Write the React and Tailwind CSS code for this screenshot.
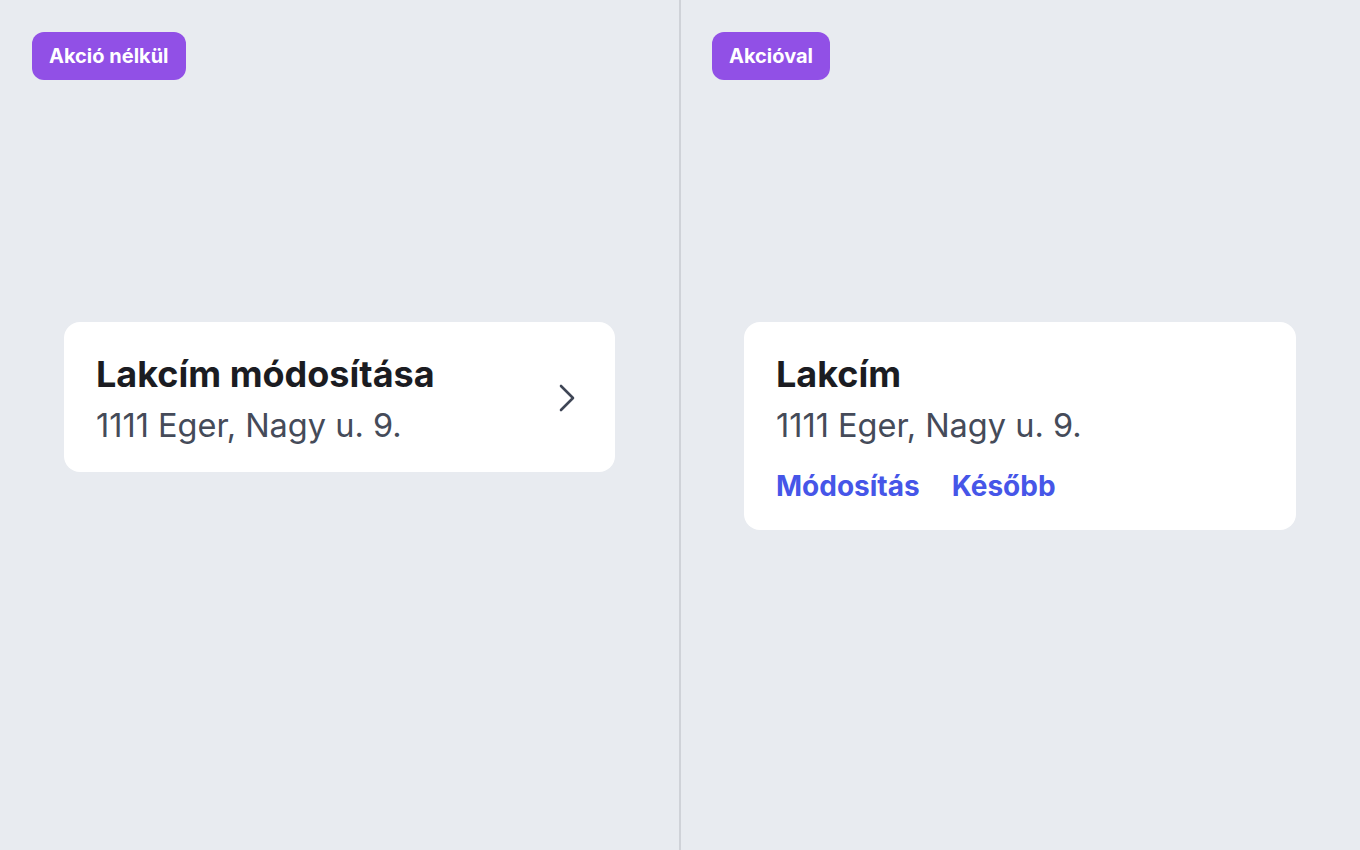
import { ChevronRight } from "lucide-react";

function Badge({ children }) {
  return (
    <span className="inline-flex h-12 items-center rounded-xl bg-[#9150e6] px-[17px] text-[20px] font-bold text-white">
      {children}
    </span>
  );
}

export default function App() {
  return (
    <main className="flex h-[850px] w-[1360px] bg-[#e8ebf0] font-['Inter',sans-serif]">
      {/* bez akcio */}
      <section className="flex w-[679px] flex-col pt-8">
        <div className="px-8">
          <Badge>Akció nélkül</Badge>
        </div>
        <div className="mx-16 mt-[242px] flex items-center justify-between rounded-2xl bg-white px-8 pt-[26px] pb-5">
          <div>
            <h2 className="text-[36px] leading-[52px] font-bold text-[#1b1c22]">Lakcím módosítása</h2>
            <p className="text-[32.5px] leading-[52px] text-[#454b59]">1111 Eger, Nagy u. 9.</p>
          </div>
          <ChevronRight className="-mr-2 mb-[5px] h-12 w-12 text-[#3f4656]" strokeWidth={1.3} />
        </div>
      </section>

      <div className="w-[2px] bg-[#cfd2d8]" />

      {/* akcioval */}
      <section className="flex flex-1 flex-col pt-8">
        <div className="pl-[31px]">
          <Badge>Akcióval</Badge>
        </div>
        <div className="mt-[242px] mr-16 ml-[63px] rounded-2xl bg-white px-8 pt-[26px] pb-[26px]">
          <h2 className="text-[36px] leading-[52px] font-bold text-[#1b1c22]">Lakcím</h2>
          <p className="text-[32.5px] leading-[52px] text-[#454b59]">1111 Eger, Nagy u. 9.</p>
          <div className="mt-4 flex gap-8 text-[28px] leading-9 font-bold text-[#4656e8]">
            <button>Módosítás</button>
            <button>Később</button>
          </div>
        </div>
      </section>
    </main>
  );
}
